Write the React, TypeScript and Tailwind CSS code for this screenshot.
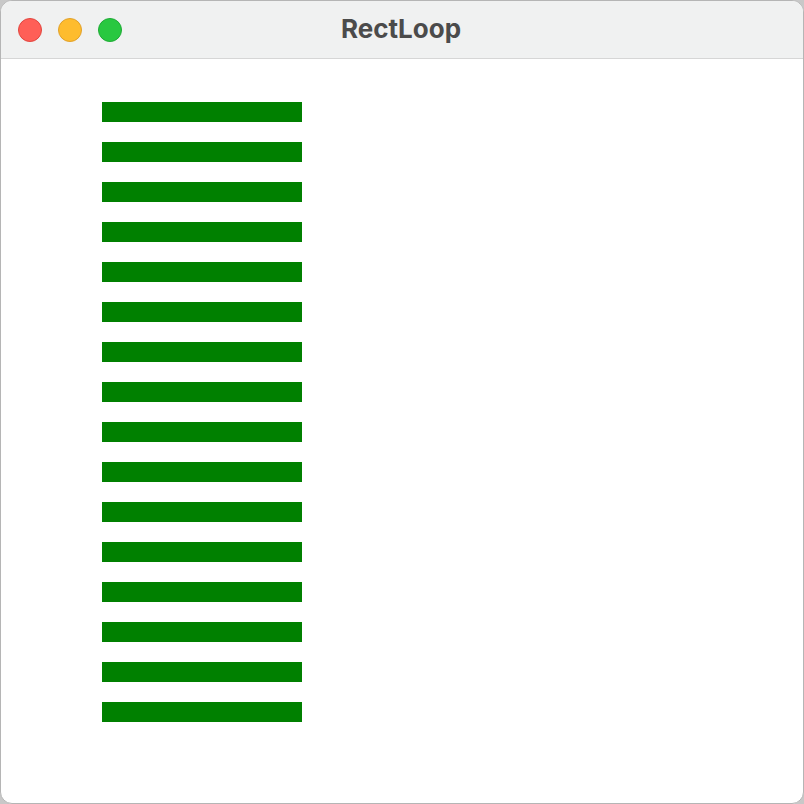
const bars = Array.from({ length: 16 }, (_, i) => i)

export default function App() {
  return (
    <div className="w-[804px] h-[804px] bg-[#c8c8c8]">
      <div className="w-full h-full flex flex-col rounded-[12px] overflow-hidden border border-[#b5b5b5] bg-white">
        {/* title bar */}
        <div className="relative h-[58px] shrink-0 flex items-center bg-[#f0f1f1] border-b border-[#d6d6d6]">
          <div className="flex gap-4 pl-[17px]">
            <span className="w-6 h-6 rounded-full bg-[#ff5f57] border border-[#e2463f]" />
            <span className="w-6 h-6 rounded-full bg-[#febc2e] border border-[#e1a12a]" />
            <span className="w-6 h-6 rounded-full bg-[#28c840] border border-[#1eab35]" />
          </div>
          <div
            className="absolute inset-0 flex items-center justify-center pb-[2px] pr-[2px] text-[26px] font-bold text-[#4b4b4b]"
            style={{ fontFamily: 'Inter, "Liberation Sans", sans-serif' }}
          >
            RectLoop
          </div>
        </div>
        {/* canvas */}
        <div className="flex-1 flex flex-col gap-5 pl-[101px] pt-[43px]">
          {bars.map(i => (
            <div key={i} className="w-[200px] h-5 bg-[#008000]" />
          ))}
        </div>
      </div>
    </div>
  )
}
